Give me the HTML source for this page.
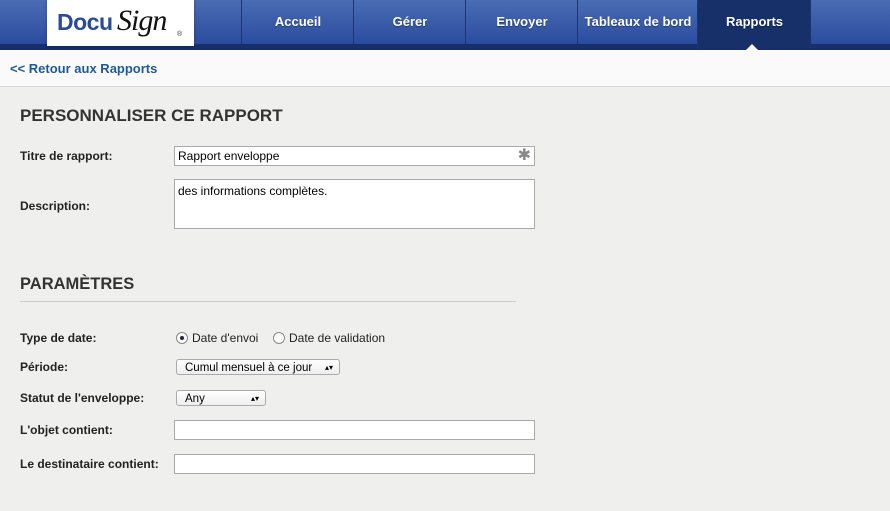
<!DOCTYPE html>
<html><head><meta charset="utf-8"><style>
body{margin:0;width:890px;height:511px;overflow:hidden;background:#efefed;font-family:"Liberation Sans",Arial,sans-serif;position:relative}
.nav{position:absolute;left:0;top:0;width:890px;height:44px;background:linear-gradient(#4a6cb3,#2a4c9e);border-bottom:6px solid #17306a}
.logo{position:absolute;left:47px;top:0;width:147px;height:46px;background:#fff;box-shadow:0 0 3px rgba(0,0,0,.3)}
.logo .d{position:absolute;left:10px;top:9px;font:bold 23px "Liberation Sans",sans-serif;color:#2b4a97;letter-spacing:-0.5px}
.logo .s{position:absolute;left:70px;top:4px;font:italic 30px "Liberation Serif",serif;color:#111;letter-spacing:-1px}
.logo .r{position:absolute;left:130px;top:31px;font-size:7px;color:#333}
.tab{position:absolute;top:0;height:44px;line-height:44px;text-align:center;color:#fff;font-weight:bold;font-size:13px;border-left:1px solid #1d3470;text-shadow:0 1px 1px rgba(0,0,0,.4)}
.act{background:#17306a;height:50px;line-height:44px}
.sub{position:absolute;left:0;top:50px;width:890px;height:36px;background:#fafafa;border-bottom:1px solid #d6d6d6}
.sub a{position:absolute;left:10px;top:11px;font-size:13px;font-weight:bold;color:#1e5a96;text-decoration:none}
.arrow{position:absolute;left:746px;top:44px;width:0;height:0;border:6px solid transparent;border-bottom-color:#fafafa;border-top:0}
h2{position:absolute;left:20px;margin:0;font-size:17px;font-weight:bold;color:#333}
.l{position:absolute;left:20px;font-size:12px;font-weight:bold;color:#222}
.in{position:absolute;left:174px;width:359px;height:18px;background:#fff;border:1px solid #aaa;font-size:12px;box-sizing:content-box}
.t{position:absolute;font-size:12px;color:#222}
.sel{position:absolute;left:176px;height:16px;border:1px solid #aaa;border-radius:3px;background:linear-gradient(#fff,#eee);font-size:11.5px;line-height:16px;padding-left:8px;box-sizing:border-box}
.sel span{position:absolute;right:6px;top:0;font-size:8px}
.rad{position:absolute;width:12px;height:12px;border:1px solid #888;border-radius:50%;background:#fff;box-sizing:border-box}
</style></head><body>
<div class="nav"></div>
<div class="logo"><span class="d">Docu</span><span class="s">Sign</span><span class="r">®</span></div>
<div class="tab" style="left:241px;width:112px">Accueil</div>
<div class="tab" style="left:353px;width:112px">Gérer</div>
<div class="tab" style="left:465px;width:112px">Envoyer</div>
<div class="tab" style="left:577px;width:120px">Tableaux de bord</div>
<div class="tab act" style="left:697px;width:113px">Rapports</div>
<div class="tab" style="left:810px;width:80px"></div>
<div class="sub"><a>&lt;&lt; Retour aux Rapports</a></div>
<div class="arrow"></div>
<h2 style="top:106px">PERSONNALISER CE RAPPORT</h2>
<div class="l" style="top:149px">Titre de rapport:</div>
<div class="in" style="top:146px;height:18px;line-height:18px;padding-left:3px;width:356px">Rapport enveloppe<span style="position:absolute;right:3px;color:#888;font-size:16px">✱</span></div>
<div class="l" style="top:199px">Description:</div>
<div class="in" style="top:179px;height:50px;padding:4px 3px;box-sizing:border-box;width:361px">des informations complètes.</div>
<h2 style="top:275px;font-size:16.5px">PARAMÈTRES</h2>
<div style="position:absolute;left:20px;top:301px;width:496px;height:1px;background:#ccc"></div>
<div class="l" style="top:331px">Type de date:</div>
<div class="rad" style="left:176px;top:332px"><div style="position:absolute;left:3px;top:3px;width:4px;height:4px;border-radius:50%;background:#223"></div></div>
<div class="t" style="left:192px;top:331px">Date d'envoi</div>
<div class="rad" style="left:273px;top:332px"></div>
<div class="t" style="left:289px;top:331px">Date de validation</div>
<div class="l" style="top:360px">Période:</div>
<div class="sel" style="top:359px;width:164px">Cumul mensuel à ce jour<span>▴▾</span></div>
<div class="l" style="top:391px">Statut de l'enveloppe:</div>
<div class="sel" style="top:390px;width:90px">Any<span>▴▾</span></div>
<div class="l" style="top:423px">L'objet contient:</div>
<div class="in" style="top:420px"></div>
<div class="l" style="top:457px">Le destinataire contient:</div>
<div class="in" style="top:454px"></div>
</body></html>
